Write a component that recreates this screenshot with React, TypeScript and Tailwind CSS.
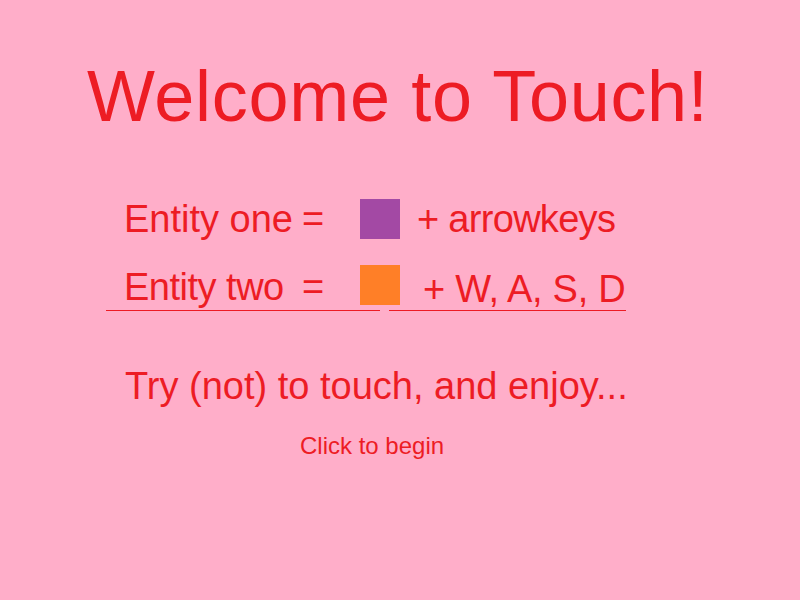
import React from "react";

export default function App() {
  const font = { fontFamily: '"Liberation Sans", Arial, sans-serif' };
  return (
    <div
      className="w-[800px] h-[600px] bg-[#ffaec9] text-[#ed1c24] overflow-hidden flex flex-col"
      style={font}
    >
      <div className="pt-[60px] pl-[87px] text-[72px] leading-[72px] tracking-[0.7px] whitespace-nowrap">
        Welcome to Touch!
      </div>

      <div className="mt-[67px] pl-[124px] flex h-[40px] text-[38px] leading-[40px] whitespace-nowrap">
        <div className="w-[236px] flex">
          <span className="w-[178px]">Entity one</span>
          <span>=</span>
        </div>
        <div className="w-[40px] h-[40px] bg-[#a349a4]" />
        <span className="ml-[17px] tracking-[-0.7px]">+ arrowkeys</span>
      </div>

      <div className="mt-[26px] pl-[124px] flex h-[40px] text-[38px] leading-[40px] whitespace-nowrap">
        <div className="w-[236px] flex pt-[2px]">
          <span className="w-[178px] tracking-[-0.5px]">Entity two</span>
          <span>=</span>
        </div>
        <div className="w-[40px] h-[40px] bg-[#ff7f27]" />
        <span className="ml-[23px] pt-[4px] tracking-[-0.3px]">+ W, A, S, D</span>
      </div>

      <div className="mt-[5px] flex">
        <div className="ml-[106px] w-[274px] h-px bg-[#ed1c24]" />
        <div className="ml-[9px] w-[237px] h-px bg-[#ed1c24]" />
      </div>

      <div className="mt-[55px] pl-[125px] text-[38px] leading-[40px] whitespace-nowrap">
        Try (not) to touch, and enjoy...
      </div>

      <div className="mt-[28px] pl-[300px] text-[24px] leading-[24px] whitespace-nowrap">
        Click to begin
      </div>
    </div>
  );
}
